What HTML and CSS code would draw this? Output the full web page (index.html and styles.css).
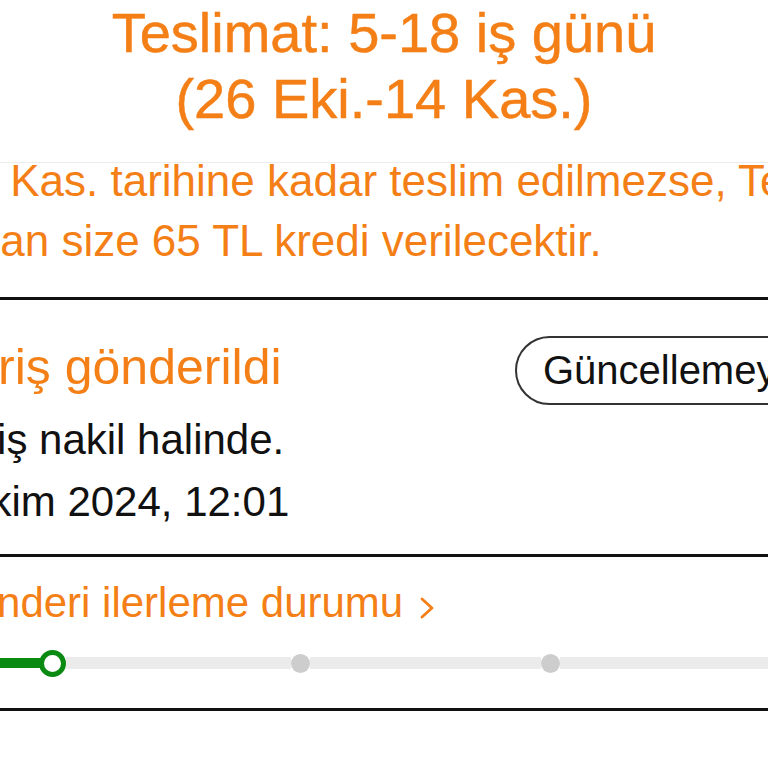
FILE: index.html
```html
<!DOCTYPE html>
<html lang="tr">
<head>
<meta charset="utf-8">
<title>Sipariş takibi</title>
<link rel="stylesheet" href="styles.css">
</head>
<body>
<div class="page">
  <header class="eta">
    <div class="eta-line">Teslimat: 5-18 iş günü</div>
    <div class="eta-line">(26 Eki.-14 Kas.)</div>
  </header>
  <div class="divider-light"></div>
  <div class="notice">
    <div class="notice-line n1">14 Kas. tarihine kadar teslim edilmezse, Temu</div>
    <div class="notice-line n2">tarafından size 65 TL kredi verilecektir.</div>
  </div>
  <section class="card status">
    <div class="status-head">
      <div class="status-title">Sipariş gönderildi</div>
      <button class="pill">Güncellemeye abone ol</button>
    </div>
    <div class="status-text s1">Sipariş nakil halinde.</div>
    <div class="status-text s2">23 Ekim 2024, 12:01</div>
  </section>
  <section class="card progress">
    <div class="progress-link">Gönderi ilerleme durumu<svg class="chev" width="16" height="22" viewBox="0 0 16 22"><polyline points="3,2 13,11 3,20" fill="none" stroke="#f47f16" stroke-width="2.8" stroke-linecap="round" stroke-linejoin="round"/></svg></div>
    <div class="track">
      <div class="done"></div>
      <div class="ring"></div>
      <div class="seg seg1"></div>
      <div class="dot"></div>
      <div class="seg seg2"></div>
      <div class="dot"></div>
      <div class="seg seg3"></div>
    </div>
  </section>
</div>
</body>
</html>
```
FILE: styles.css
```css
html, body {
  margin: 0;
  padding: 0;
  background: #ffffff;
}
body {
  width: 768px;
  height: 768px;
  overflow: hidden;
  font-family: "Liberation Sans", Arial, sans-serif;
}
.page {
  width: 768px;
  overflow: hidden;
}
.eta {
  text-align: center;
  color: #f47f16;
  font-size: 56px;
  line-height: 66px;
  -webkit-text-stroke: 0.5px #f47f16;
}
.divider-light {
  height: 1px;
  background: #ececec;
  margin-top: 30px;
}
.notice {
  color: #f47f16;
  font-size: 44px;
  line-height: 60px;
  margin-top: -12px;
  padding-bottom: 26px;
}
.notice-line {
  white-space: nowrap;
}
.n1 { margin-left: -51px; }
.n2 { margin-left: -149px; }
.card {
  border-top: 3px solid #111111;
}
.status {
  padding-top: 36px;
  padding-bottom: 21px;
}
.status-head {
  display: flex;
  align-items: flex-start;
}
.status-title {
  flex: 0 0 515px;
  color: #f47f16;
  font-size: 50px;
  line-height: 62px;
  white-space: nowrap;
  text-indent: -102px;
}
.pill {
  flex: none;
  height: 69px;
  box-sizing: border-box;
  border: 2px solid #333333;
  border-radius: 35px;
  background: #ffffff;
  padding: 0 26px;
  font-family: "Liberation Sans", Arial, sans-serif;
  font-size: 40px;
  color: #111111;
  white-space: nowrap;
}
.status-text {
  color: #111111;
  font-size: 42px;
  line-height: 62px;
  white-space: nowrap;
}
.s1 { margin-top: 4px; margin-left: -101px; }
.s2 { margin-left: -96px; }
.progress {
  padding-top: 16px;
  padding-bottom: 30px;
  border-bottom: 3px solid #111111;
}
.progress-link {
  color: #f47f16;
  font-size: 42px;
  line-height: 60px;
  white-space: nowrap;
  margin-left: -59px;
}
.chev {
  margin-left: 16px;
  vertical-align: -2px;
}
.track {
  display: flex;
  align-items: center;
  height: 30px;
  margin-top: 15px;
}
.done {
  flex: 0 0 40px;
  height: 10px;
  background: #0b8a12;
}
.ring {
  flex: 0 0 auto;
  width: 27px;
  height: 27px;
  box-sizing: border-box;
  border: 5px solid #0b8a12;
  border-radius: 50%;
  background: #ffffff;
  margin-left: -1px;
}
.seg {
  height: 12px;
  background: #ebebeb;
}
.seg1 { flex: 0 0 225px; }
.seg2 { flex: 0 0 231px; }
.seg3 { flex: 1 1 auto; }
.dot {
  flex: 0 0 19px;
  height: 19px;
  border-radius: 50%;
  background: #cdcdcd;
}
```
